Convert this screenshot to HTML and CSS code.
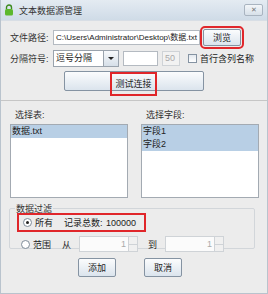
FILE: index.html
```html
<!DOCTYPE html>
<html lang="zh-CN">
<head>
    <meta charset="UTF-8">
    <title>文本数据源管理</title>
    <link rel="stylesheet" href="styles.css">
</head>
<body>
    <div class="window">
        <div class="titlebar">
            <svg class="app-icon" width="10" height="12" viewBox="0 0 10 12">
                <path d="M2.5 5 V3.5 a2.5 2.5 0 0 1 5 0 V5" fill="none" stroke="#3c8a1e" stroke-width="1.4"/>
                <rect x="1" y="5" width="8" height="6.5" rx="1.5" fill="#5cb82c"/>
            </svg>
            <span class="title">文本数据源管理</span>
            <span class="close">✕</span>
        </div>

        <div class="top">
            <div class="row">
                <label class="label">文件路径:</label>
                <div class="field path">C:\Users\Administrator\Desktop\数据.txt</div>
                <button class="btn browse mark">浏览</button>
            </div>
            <div class="row">
                <label class="label">分隔符号:</label>
                <div class="combo">
                    <span class="combo-text">逗号分隔</span>
                    <span class="combo-arrow"></span>
                </div>
                <div class="field small"></div>
                <div class="field tiny disabled">50</div>
                <span class="check"></span>
                <span class="check-label">首行含列名称</span>
            </div>
            <div class="row center">
                <button class="btn test"><span class="mark-box">测试连接</span></button>
            </div>
        </div>

        <div class="lists">
            <div class="list-col">
                <div class="list-label">选择表:</div>
                <div class="listbox">
                    <div class="item selected">数据.txt</div>
                </div>
            </div>
            <div class="list-col">
                <div class="list-label">选择字段:</div>
                <div class="listbox">
                    <div class="item selected">字段1</div>
                    <div class="item selected">字段2</div>
                </div>
            </div>
        </div>

        <fieldset class="filter">
            <legend>数据过滤</legend>
            <div class="frow all">
                <span class="radio on"></span>
                <span class="rlabel">所有</span>
                <span class="count-label">记录总数:</span>
                <span class="count">100000</span>
            </div>
            <div class="frow">
                <span class="radio"></span>
                <span class="rlabel">范围</span>
                <span class="from">从</span>
                <div class="spinner"><span class="spin-val">1</span><span class="spin-btns"><i></i><i></i></span></div>
                <span class="to">到</span>
                <div class="spinner"><span class="spin-val">1</span><span class="spin-btns"><i></i><i></i></span></div>
            </div>
        </fieldset>

        <div class="actions">
            <button class="btn act">添加</button>
            <button class="btn act">取消</button>
        </div>
    </div>
</body>
</html>
```

FILE: styles.css
```css
body {
    margin: 0;
    font-family: "Liberation Sans", "Noto Sans CJK SC", sans-serif;
    font-size: 9px;
    color: #222;
}
.window {
    width: 268px;
    height: 294px;
    background: #ececec;
    box-sizing: border-box;
    border: 1px solid #b9c3cd;
    border-top: none;
    overflow: hidden;
    white-space: nowrap;
}
.titlebar {
    height: 20px;
    display: flex;
    align-items: center;
    padding: 0 4px 0 3px;
    background: linear-gradient(#e4ebf2, #cfdbe7);
    border-bottom: 1px solid #d8dee5;
}
.app-icon {
    margin-right: 5px;
}
.title {
    flex: 1;
    font-size: 9px;
    color: #333;
}
.close {
    width: 17px;
    height: 10px;
    line-height: 10px;
    text-align: center;
    font-size: 7px;
    color: #777;
    border: 1px solid #a9b4c0;
    border-radius: 2px;
    background: linear-gradient(#f3f6f9, #d7e0e9);
}
.top {
    padding: 6px 0 0 9px;
    border-bottom: 1px solid #c6c6c6;
    height: 73px;
}
.row {
    display: flex;
    align-items: center;
    height: 20px;
}
.row + .row {
    margin-top: 1px;
}
.row.center {
    justify-content: center;
    padding-right: 10px;
    margin-top: 3px;
}
.label {
    width: 43px;
    color: #333;
}
.field {
    height: 13px;
    line-height: 13px;
    background: #fff;
    border: 1px solid #b4bac1;
    padding: 0 2px;
    box-sizing: content-box;
    overflow: hidden;
}
.field.path {
    width: 141px;
    font-size: 8px;
    letter-spacing: 0;
}
.field.small {
    width: 29px;
    margin-left: 4px;
}
.field.tiny {
    width: 12px;
    margin-left: 4px;
}
.field.disabled {
    background: #f2f2f2;
    color: #aaa;
    border-color: #cfd3d7;
}
.btn {
    font-family: inherit;
    font-size: 9px;
    color: #222;
    border: 1px solid #8593a2;
    border-radius: 2px;
    background: linear-gradient(#fbfcfd, #dbe4ed);
    padding: 0;
}
.browse {
    width: 38px;
    height: 17px;
    margin-left: 3px;
}
.mark {
    outline: 2px solid #e0262a;
    outline-offset: 1px;
}
.combo {
    width: 64px;
    height: 15px;
    display: flex;
    border: 1px solid #9aa3ad;
    background: #fff;
}
.combo-text {
    flex: 1;
    line-height: 15px;
    padding-left: 2px;
}
.combo-arrow {
    width: 14px;
    border-left: 1px solid #9aa3ad;
    background: linear-gradient(#f7f9fb, #d6dfe8);
    position: relative;
}
.combo-arrow::after {
    content: "";
    position: absolute;
    left: 4px;
    top: 6px;
    border: 3px solid transparent;
    border-top: 3px solid #222;
    border-bottom: none;
}
.check {
    width: 7px;
    height: 7px;
    margin-left: 8px;
    border: 1px solid #8593a2;
    background: linear-gradient(#e3e8ee, #fff);
}
.check-label {
    margin-left: 3px;
}
.test {
    width: 140px;
    height: 20px;
}
.mark-box {
    display: inline-block;
    padding: 4px 3px;
    border: 2px solid #e0262a;
    line-height: 12px;
}
.lists {
    display: flex;
    gap: 13px;
    padding: 7px 0 0 9px;
}
.list-col {
    width: 118px;
}
.list-label {
    padding-left: 5px;
    height: 16px;
    line-height: 14px;
    color: #333;
}
.listbox {
    height: 72px;
    background: #fff;
    border: 1px solid #a3aab2;
}
.item {
    height: 13px;
    line-height: 13px;
    padding-left: 1px;
}
.item.selected {
    background: #b8cfe5;
}
.filter {
    margin: 4px 12px 0 8px;
    height: 45px;
    border: 1px solid #d2d6da;
    border-radius: 2px;
    padding: 0 0 0 8px;
}
.filter legend {
    padding: 0 1px;
    margin-left: -3px;
    color: #333;
}
.frow {
    display: flex;
    align-items: center;
    height: 18px;
}
.frow.all {
    width: 124px;
    margin-left: -1px;
    padding-left: 1px;
    border: 2px solid #e0262a;
    height: 15px;
    margin-top: -2px;
    margin-bottom: 3px;
}
.radio {
    width: 7px;
    height: 7px;
    border-radius: 50%;
    border: 1px solid #7f8c99;
    background: #fff;
    margin-left: 3px;
    position: relative;
}
.radio.on::after {
    content: "";
    position: absolute;
    left: 2px;
    top: 2px;
    width: 3px;
    height: 3px;
    border-radius: 50%;
    background: #222;
}
.rlabel {
    margin-left: 3px;
    width: 29px;
}
.count-label {
    width: 42px;
}
.from, .to {
    width: 17px;
}
.to {
    margin-left: 10px;
}
.spinner {
    width: 57px;
    height: 14px;
    display: flex;
    border: 1px solid #cfd3d7;
    background: #fbfbfb;
}
.spin-val {
    flex: 1;
    text-align: right;
    padding-right: 2px;
    color: #aaa;
    line-height: 14px;
}
.spin-btns {
    width: 8px;
    display: flex;
    flex-direction: column;
    border-left: 1px solid #cfd3d7;
}
.spin-btns i {
    flex: 1;
    background: #f0f0f0;
}
.spin-btns i + i {
    border-top: 1px solid #cfd3d7;
}
.actions {
    display: flex;
    justify-content: center;
    gap: 28px;
    padding: 9px 8px 0 0;
}
.act {
    width: 38px;
    height: 19px;
}
```
